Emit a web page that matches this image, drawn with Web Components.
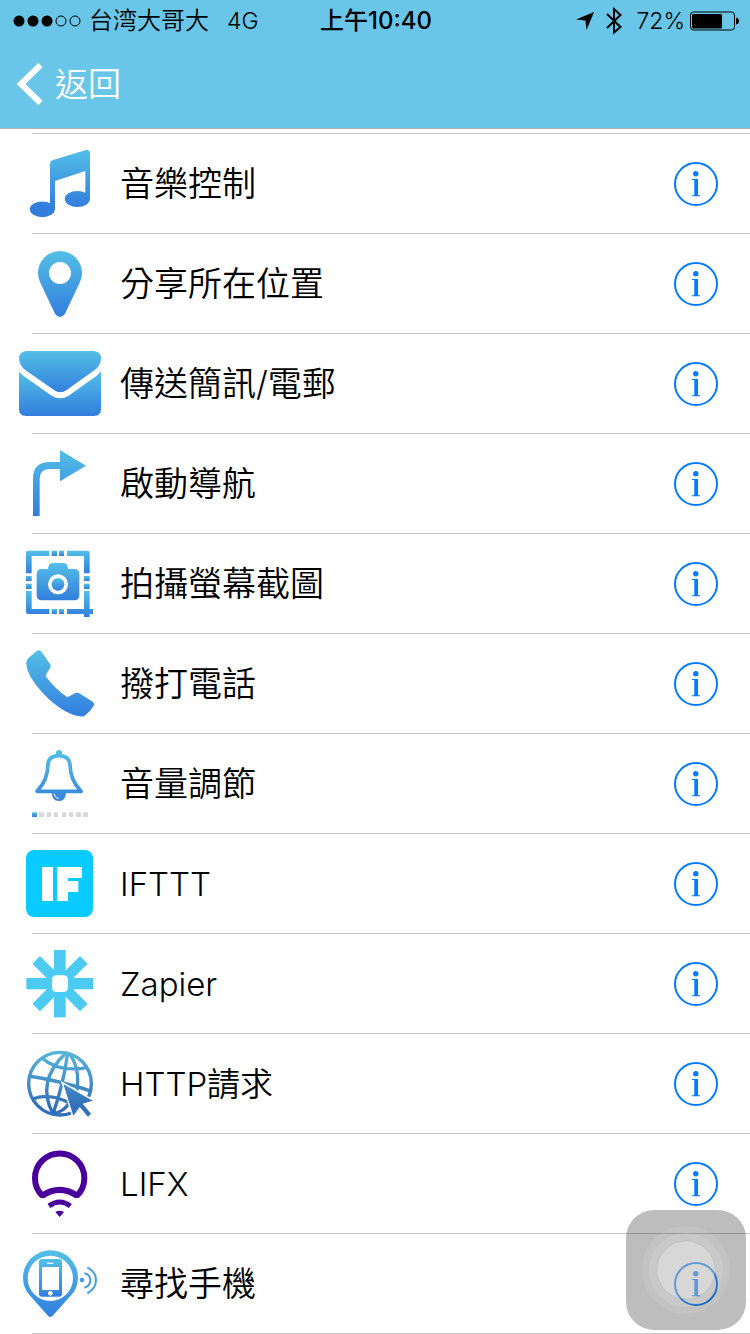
<!DOCTYPE html>
<html lang="zh-Hant">
<head>
<meta charset="utf-8">
<meta name="viewport" content="width=device-width, initial-scale=1">
<title>動作列表</title>
<style>
  body {
    margin: 0;
    background: #fff;
    color: #000;
    font-family: Inter, "Noto Sans CJK TC", sans-serif;
    font-weight: 350;
  }
</style>
</head>
<body>
<action-screen></action-screen>

<template id="screen-template">
  <style>
    :host { display: block; }
    header { background: #6ac6e8; border-bottom: 1px solid #b2b2b2; }
    main { padding-top: 4px; }
  </style>
  <header>
    <status-bar></status-bar>
    <nav-bar>返回</nav-bar>
  </header>
  <main>
    <action-list>
      <action-row icon="music">音樂控制</action-row>
      <action-row icon="pin">分享所在位置</action-row>
      <action-row icon="mail">傳送簡訊/電郵</action-row>
      <action-row icon="turn">啟動導航</action-row>
      <action-row icon="camera">拍攝螢幕截圖</action-row>
      <action-row icon="phone">撥打電話</action-row>
      <action-row icon="bell">音量調節</action-row>
      <action-row icon="ifttt">IFTTT</action-row>
      <action-row icon="zapier">Zapier</action-row>
      <action-row icon="globe">HTTP請求</action-row>
      <action-row icon="lifx">LIFX</action-row>
      <action-row icon="find">尋找手機</action-row>
    </action-list>
  </main>
  <assistive-touch></assistive-touch>
</template>

<template id="status-template">
  <style>
    :host {
      display: grid;
      grid-template-columns: 1fr auto 1fr;
      align-items: center;
      box-sizing: border-box;
      height: 40px;
      padding: 2px 11px 0 13px;
      font-family: Inter, "Noto Sans CJK SC", sans-serif;
      font-size: 24px;
      line-height: 38px;
      white-space: nowrap;
    }
    div { display: flex; align-items: center; }
    svg { display: block; flex: none; }
    .left { gap: 8px; }
    .network { margin-left: 10px; font-size: 23px; }
    .time { font-weight: 500; }
    .right { justify-content: flex-end; }
    .bluetooth { margin: 0 14px 0 12px; }
    .percent { font-size: 23px; margin-right: 5px; }
  </style>
  <div class="left">
    <svg width="68" height="12" viewBox="0 0 68 12" aria-hidden="true">
      <circle cx="6" cy="6" r="5.5"/><circle cx="20" cy="6" r="5.5"/><circle cx="34" cy="6" r="5.5"/>
      <g fill="none" stroke="#000"><circle cx="48" cy="6" r="5"/><circle cx="62" cy="6" r="5"/></g>
    </svg>
    <span>台湾大哥大</span>
    <span class="network">4G</span>
  </div>
  <span class="time">上午10:40</span>
  <div class="right">
    <svg width="18" height="18" viewBox="0 0 18 18" aria-hidden="true"><path d="M18 0 10.500 18 9.500 8.500 0 7.500Z"/></svg>
    <svg class="bluetooth" width="16" height="28" viewBox="0 0 16 28" aria-hidden="true">
      <path d="M1 7 14.500 20 8 25.500V2L14.500 8 1 21" fill="none" stroke="#000" stroke-width="2"/>
    </svg>
    <span class="percent">72%</span>
    <svg width="49" height="20" viewBox="0 0 49 20" aria-hidden="true">
      <rect x=".5" y="1" width="44" height="18" rx="3" fill="none" stroke="#000"/>
      <rect x="2" y="3" width="30" height="14.500" rx="1"/>
      <path d="M46 6.500q3 .5 3 3.500t-3 3.500Z"/>
    </svg>
  </div>
</template>

<template id="nav-template">
  <style>
    :host { display: flex; align-items: center; height: 88px; padding: 0 16px; }
    a {
      display: flex; align-items: center; gap: 12px;
      color: #fff; font-size: 33px; line-height: 48px; text-decoration: none;
    }
    svg { display: block; }
  </style>
  <a href="#back">
    <svg width="27" height="44" viewBox="0 0 27 44" aria-hidden="true"><path d="M24.500 3 5 22 24.500 41" fill="none" stroke="#fff" stroke-width="6"/></svg>
    <span><slot></slot></span>
  </a>
</template>

<template id="list-template">
  <style>
    :host { display: block; }
    :host::after { content: ""; display: block; height: 1px; margin-left: 32px; background: #c8c7cc; }
  </style>
  <slot></slot>
</template>

<template id="row-template">
  <style>
    :host {
      display: grid;
      grid-template-columns: 90px 1fr 44px;
      align-items: center;
      padding: 17px 32px 15px 15px;
      background: linear-gradient(#c8c7cc, #c8c7cc) 32px 0 / 100% 1px no-repeat;
    }
    .label { padding-left: 15px; font-size: 34px; line-height: 48px; }
    :host([latin]) .label { font-size: 33px; }
  </style>
  <action-icon></action-icon>
  <span class="label"><slot></slot></span>
  <info-button></info-button>
</template>

<template id="info-template">
  <style>
    :host { display: block; }
    button { display: block; padding: 0; border: 0; background: none; cursor: pointer; }
    svg { display: block; }
  </style>
  <button type="button" aria-label="詳細資訊">
    <svg width="44" height="44" viewBox="0 0 44 44" fill="#007aff">
      <circle cx="22" cy="22" r="21" fill="none" stroke="#007aff" stroke-width="2"/>
      <circle cx="21.800" cy="11.700" r="2.700"/>
      <path d="M18 17h6v16.200H26v1h-8v-1h2.300V18H18Z"/>
    </svg>
  </button>
</template>

<template id="touch-template">
  <style>
    :host { display: block; position: fixed; right: 4px; bottom: 4px; }
    button { display: block; padding: 0; border: 0; border-radius: 28px; background: rgb(0 0 0 / 26%); }
    svg { display: block; }
  </style>
  <button type="button" aria-label="AssistiveTouch">
    <svg width="120" height="120" viewBox="0 0 120 120" fill="#fff">
      <circle cx="60" cy="60" r="44" fill-opacity=".08"/>
      <circle cx="60" cy="60" r="37" fill-opacity=".1"/>
      <circle cx="60" cy="60" r="29" fill-opacity=".26" stroke="#000" stroke-opacity=".06"/>
    </svg>
  </button>
</template>

<script>
  // Each drawing uses a 270 x 204 grid, shown at 90 x 68.
  // "g" shades a whole icon from top to bottom, "b" shades each shape by itself.
  const ICONS = {
    music: `<g transform="translate(-45 -60)" fill="url(#g)">
      <path d="M150 101Q150 93 157 91L258 60Q270 58 270 70V208H256V123L165 153V238H150Z"/>
      <ellipse cx="232" cy="207" rx="37.500" ry="24"/><ellipse cx="127" cy="238" rx="37.500" ry="23.500"/></g>`,
    pin: `<g transform="translate(-45 -360)"><path fill="url(#b)" fill-rule="evenodd" d="M180 363A66 66 0 0 1 246 429Q246 443 239 458L195 551Q180 571 165 551L121 458Q114 443 114 429A66 66 0 0 1 180 363ZM147 429a33 33 0 1 0 66 0a33 33 0 1 0-66 0Z"/></g>`,
    mail: `<g transform="translate(-45 -60)" fill="url(#b)">
      <path d="M78 63H282Q303 65 303 86Q302 106 284 120L200 180Q181 194 162 180L76 120Q58 106 57 86Q58 65 78 63Z"/>
      <path d="M57 125L70 137L155 197Q181 212 206 197L290 137L303 124V238Q303 258 283 258H77Q57 258 57 238Z"/></g>`,
    turn: `<g transform="translate(-45 -360)"><path fill="url(#b)" d="M180 360L258 407L180 454V417H150Q119 417 119 446V558H99V446Q99 396 150 396H180Z"/></g>`,
    camera: `<g transform="translate(-45 -60)" fill="url(#b)">
      <path d="M78 130V68Q78 62 84 62H148V78H95V130Z"/><path d="M201 62H262Q269 62 269 68V130H252V78H201Z"/>
      <path d="M78 183H95V237H148V252H84Q78 252 78 246Z"/><path d="M252 183H269V237H279V252H269V261H252V252H201V237H252Z"/>
      <rect x="155" y="62" width="16" height="16"/><rect x="177" y="62" width="15" height="16"/>
      <rect x="155" y="237" width="16" height="15"/><rect x="177" y="237" width="15" height="15"/>
      <rect x="78" y="138" width="17" height="15"/><rect x="78" y="161" width="17" height="16"/>
      <rect x="252" y="138" width="17" height="15"/><rect x="252" y="161" width="17" height="16"/>
      <path d="M144 117Q145 99 158 99H190Q204 99 204 117H222Q238 117 238 133V196Q238 211 222 211H126Q110 211 110 196V133Q110 117 126 117Z"/>
      <circle cx="174" cy="163" r="30" fill="#fff"/><circle cx="174" cy="163" r="19"/></g>`,
    phone: `<g transform="translate(-45 -360)"><path fill="url(#b)" d="M79 402Q77 392 86 384L110 363Q118 358 124 365L151 403Q154 410 148 418Q140 428 137 439Q165 477 202 502Q212 496 222 491Q231 486 240 491L278 515Q284 520 281 527Q272 542 256 556Q250 561 240 559Q200 555 147 508Q82 445 79 402Z"/></g>`,
    bell: `<g transform="translate(-45 -60)">
      <path d="M111 184Q144 150 144 103Q146 77 177 77Q207 77 210 103Q210 150 243 184Z" fill="none" stroke="url(#g)" stroke-width="11" stroke-linejoin="round"/>
      <circle cx="177" cy="69" r="9" fill="url(#g)"/><path d="M155 187H198Q198 213 177 213Q155 213 155 187Z" fill="url(#g)"/>
      <path d="M162 191Q164 204 176 206" fill="none" stroke="#fff" stroke-width="3"/>
      <rect x="96" y="247" width="15" height="14" fill="url(#b)"/>
      <path fill="#d8d8d8" d="M117 247h15v14h-15ZM140 247h13v14h-13ZM162 247h12v14h-12ZM186 247h12v14h-12ZM207 247h12v14h-12ZM228 247h15v14h-15ZM249 247h15v14h-15Z"/></g>`,
    ifttt: `<g transform="translate(-45 -360)" fill="#fff"><rect x="78" y="360" width="201" height="201" rx="24" fill="#0acbff"/>
      <rect x="126" y="411" width="33" height="102"/><rect x="171" y="411" width="33" height="102"/>
      <rect x="203" y="411" width="43" height="33"/><rect x="203" y="453" width="32" height="33"/></g>`,
    zapier: `<g transform="translate(135 101)" fill="#4bcbf2">
      <rect x="-18" y="-101" width="35" height="202"/><rect x="-101" y="-17" width="201" height="34"/>
      <rect x="-101" y="-16" width="202" height="32" transform="rotate(45)"/><rect x="-101" y="-16" width="202" height="32" transform="rotate(-45)"/>
      <rect x="-24" y="-25" width="48" height="50" rx="13" fill="#fff"/></g>`,
    globe: `<g transform="translate(-45 -360)"><g fill="none" stroke="url(#w)" stroke-width="10">
      <circle cx="180" cy="461" r="94"/>
      <path d="M125 383Q175 428 262 413M86 438Q180 452 276 484M96 508Q145 486 208 519M197 370Q107 455 159 552M203 370Q191 460 159 552M207 370Q242 415 230 484M156 552Q194 545 210 515"/></g>
      <path d="M190 462L278 512L248 521L273 551L264 560L239 531L220 557Z" fill="url(#w)" stroke="#fff" stroke-width="9" paint-order="stroke"/></g>`,
    lifx: `<g transform="translate(-45 -60)" fill="none" stroke="#4a009c">
      <path d="M127 197A74 74 0 1 1 231 197Q179 162 127 197Z" stroke-width="18" stroke-linejoin="bevel"/>
      <path d="M147 228Q179 204 211 228" stroke-width="15"/><path d="M166 246Q179 239 192 246L179 261Z" fill="#4a009c" stroke="none"/></g>`,
    find: `<g transform="translate(-45 -360)"><path fill="url(#b)" fill-rule="evenodd" d="M151 361A82 82 0 0 1 234 443Q233 475 213 496L158 557Q151 564 144 557L89 496Q69 473 69 443A82 82 0 0 1 151 361ZM83 445a68 68 0 1 0 136 0a68 68 0 1 0-136 0Z"/>
      <rect x="117" y="387" width="69" height="113" rx="9" fill="url(#b)"/>
      <g fill="#fff"><rect x="126" y="411" width="51" height="69"/><circle cx="151" cy="490" r="7"/><rect x="141" y="398" width="19" height="4"/></g>
      <circle cx="246" cy="450" r="7" fill="#419ee1"/>
      <path d="M253 430Q271 434 271 451T253 473M262 412Q288 426 288 451T262 490" fill="none" stroke="#419ee1" stroke-width="6"/></g>`
  };

  const stamp = (host, id) => {
    const root = host.attachShadow({ mode: "open" });
    root.append(document.getElementById(id).content.cloneNode(true));
    return root;
  };

  class ActionIcon extends HTMLElement {
    static observedAttributes = ["name"];
    constructor() { super(); this.attachShadow({ mode: "open" }); }
    attributeChangedCallback() {
      const stops = (top, bottom) => `<stop stop-color="${top}"/><stop offset="1" stop-color="${bottom}"/>`;
      const top = /translate\(-45 -(\d+)\)/.exec(ICONS[this.getAttribute("name")])?.[1] ?? 0;
      const span = `gradientUnits="userSpaceOnUse" x1="0" x2="0" y1="${top}" y2="${+top + 170}"`;
      this.shadowRoot.innerHTML = `
        <style>:host { display: block; } svg { display: block; }</style>
        <svg width="90" height="68" viewBox="0 0 270 204" aria-hidden="true">
          <defs>
            <linearGradient id="g" ${span}>${stops("#53bfe6", "#327edd")}</linearGradient>
            <linearGradient id="w" ${span}>${stops("#59b8da", "#316fba")}</linearGradient>
            <linearGradient id="b" x2="0" y2="1">${stops("#53bfe6", "#327edd")}</linearGradient>
          </defs>
          ${ICONS[this.getAttribute("name")]}
        </svg>`;
    }
  }

  class InfoButton extends HTMLElement {
    constructor() { super(); stamp(this, "info-template"); }
  }

  class ActionRow extends HTMLElement {
    constructor() { super(); stamp(this, "row-template"); }
    connectedCallback() {
      this.setAttribute("role", "listitem");
      this.toggleAttribute("latin", /^[A-Za-z]/.test(this.textContent));
      this.shadowRoot.querySelector("action-icon").setAttribute("name", this.getAttribute("icon"));
    }
  }

  class ActionList extends HTMLElement {
    constructor() { super(); stamp(this, "list-template"); }
    connectedCallback() { this.setAttribute("role", "list"); }
  }

  class StatusBar extends HTMLElement {
    constructor() { super(); stamp(this, "status-template"); }
  }

  class NavBar extends HTMLElement {
    constructor() { super(); stamp(this, "nav-template"); }
  }

  class AssistiveTouch extends HTMLElement {
    constructor() { super(); stamp(this, "touch-template"); }
  }

  class ActionScreen extends HTMLElement {
    constructor() { super(); stamp(this, "screen-template"); }
  }

  customElements.define("action-icon", ActionIcon);
  customElements.define("info-button", InfoButton);
  customElements.define("action-row", ActionRow);
  customElements.define("action-list", ActionList);
  customElements.define("status-bar", StatusBar);
  customElements.define("nav-bar", NavBar);
  customElements.define("assistive-touch", AssistiveTouch);
  customElements.define("action-screen", ActionScreen);
</script>
</body>
</html>
